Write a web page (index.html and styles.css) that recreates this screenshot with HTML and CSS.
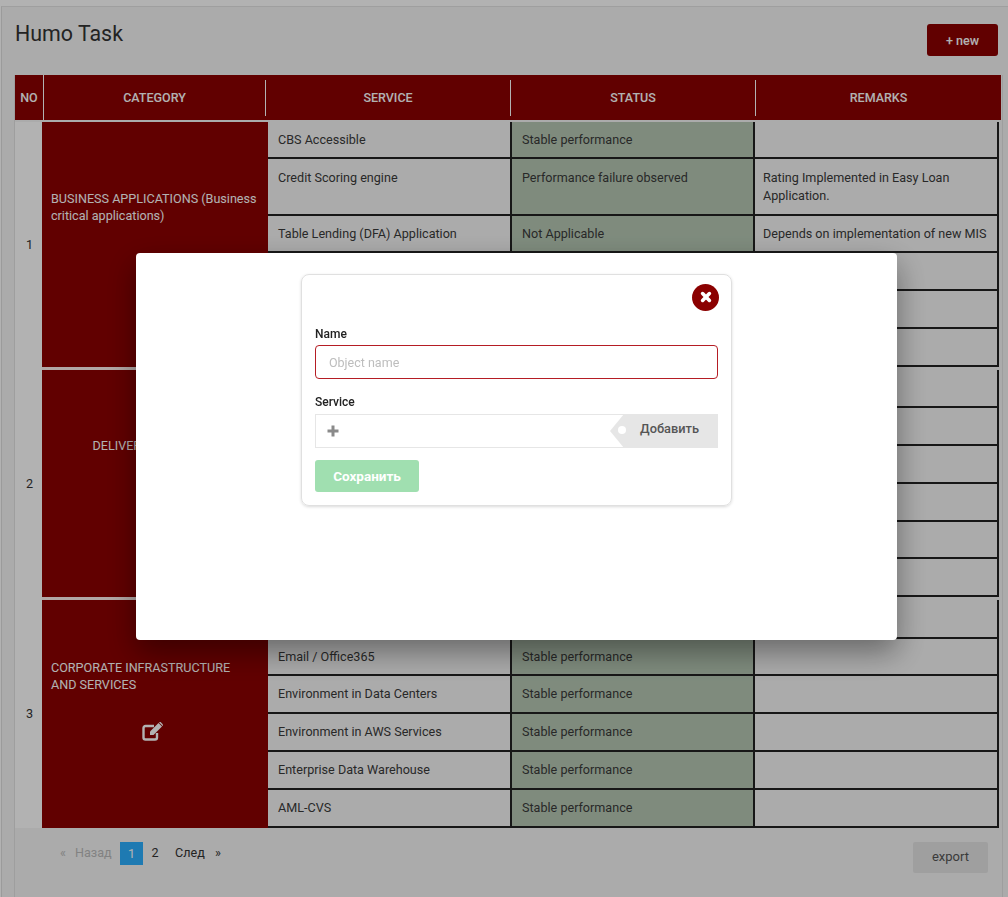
FILE: index.html
```html
<!DOCTYPE html>
<html lang="en">
<head>
  <meta charset="UTF-8">
  <title>Humo Task</title>
  <link rel="stylesheet" href="styles.css">
</head>
<body>
  <div class="page">
    <div class="topbar">
      <h1>Humo Task</h1>
      <button class="btn-new">+ new</button>
    </div>

    <div class="table-wrap">
      <div class="thead">
        <div class="th th-no">NO</div>
        <div class="th th-cat">CATEGORY</div>
        <div class="th th-col">SERVICE</div>
        <div class="th th-col">STATUS</div>
        <div class="th th-last">REMARKS</div>
      </div>

      <table class="tasks">
        <colgroup>
          <col class="c-no"><col class="c-cat"><col class="c-service"><col class="c-status"><col class="c-remarks">
        </colgroup>
        <tr class="h37">
          <td class="no" rowspan="6">1</td>
          <td class="cat" rowspan="6">
            <p>BUSINESS APPLICATIONS (Business critical applications)</p>
            <svg class="edit" viewBox="0 0 22 19"><use href="#edit-icon"/></svg>
          </td>
          <td class="service">CBS Accessible</td>
          <td class="status">Stable performance</td>
          <td class="remarks"></td>
        </tr>
        <tr class="h57">
          <td class="service">Credit Scoring engine</td>
          <td class="status">Performance failure observed</td>
          <td class="remarks">Rating Implemented in Easy Loan Application.</td>
        </tr>
        <tr class="h37">
          <td class="service">Table Lending (DFA) Application</td>
          <td class="status">Not Applicable</td>
          <td class="remarks">Depends on implementation of new MIS</td>
        </tr>
        <tr><td class="service"></td><td class="status"></td><td class="remarks"></td></tr>
        <tr><td class="service"></td><td class="status"></td><td class="remarks"></td></tr>
        <tr><td class="service"></td><td class="status"></td><td class="remarks"></td></tr>
        <tr class="gap"><td class="no"></td><td class="gap-cat"></td><td colspan="3"></td></tr>

        <tr>
          <td class="no" rowspan="6">2</td>
          <td class="cat cat-center" rowspan="6">
            <p>DELIVERY CHANNELS</p>
            <svg class="edit" viewBox="0 0 22 19"><use href="#edit-icon"/></svg>
          </td>
          <td class="service"></td><td class="status"></td><td class="remarks"></td>
        </tr>
        <tr><td class="service"></td><td class="status"></td><td class="remarks"></td></tr>
        <tr><td class="service"></td><td class="status"></td><td class="remarks"></td></tr>
        <tr><td class="service"></td><td class="status"></td><td class="remarks"></td></tr>
        <tr class="h37"><td class="service"></td><td class="status"></td><td class="remarks"></td></tr>
        <tr><td class="service"></td><td class="status"></td><td class="remarks"></td></tr>
        <tr class="gap"><td class="no"></td><td class="gap-cat"></td><td colspan="3"></td></tr>

        <tr class="h39">
          <td class="no" rowspan="6">3</td>
          <td class="cat" rowspan="6">
            <p>CORPORATE INFRASTRUCTURE AND SERVICES</p>
            <svg class="edit" viewBox="0 0 22 19"><use href="#edit-icon"/></svg>
          </td>
          <td class="service"></td><td class="status"></td><td class="remarks"></td>
        </tr>
        <tr class="h37">
          <td class="service">Email / Office365</td>
          <td class="status">Stable performance</td>
          <td class="remarks"></td>
        </tr>
        <tr>
          <td class="service">Environment in Data Centers</td>
          <td class="status">Stable performance</td>
          <td class="remarks"></td>
        </tr>
        <tr>
          <td class="service">Environment in AWS Services</td>
          <td class="status">Stable performance</td>
          <td class="remarks"></td>
        </tr>
        <tr>
          <td class="service">Enterprise Data Warehouse</td>
          <td class="status">Stable performance</td>
          <td class="remarks"></td>
        </tr>
        <tr>
          <td class="service">AML-CVS</td>
          <td class="status">Stable performance</td>
          <td class="remarks"></td>
        </tr>
      </table>

      <div class="footer">
        <div class="pager">
          <span class="muted arrow-prev">«</span>
          <span class="muted prev">Назад</span>
          <span class="current">1</span>
          <span class="num">2</span>
          <span class="next">След</span>
          <span>»</span>
        </div>
        <button class="btn-export">export</button>
      </div>
    </div>
  </div>

  <!-- затемнение и модальное окно -->
  <div class="overlay">
    <div class="modal">
      <form class="card">
        <div class="card-top">
          <button type="button" class="close">
            <svg viewBox="0 0 12 12" width="12" height="12"><path d="M2.6 2.6 9.4 9.4M9.4 2.6 2.6 9.4" stroke="#fff" stroke-width="3.6" stroke-linecap="round"/></svg>
          </button>
        </div>
        <label class="label" for="objName">Name</label>
        <input class="name-input" id="objName" type="text" placeholder="Object name">
        <div class="label service-label">Service</div>
        <div class="service-field">
          <svg class="plus" viewBox="0 0 12 12" width="12" height="12"><path d="M6 0.5V11.5M0.5 6H11.5" stroke="#8a8a8a" stroke-width="3"/></svg>
          <span class="tag">Добавить</span>
        </div>
        <button type="button" class="btn-save">Сохранить</button>
      </form>
    </div>
  </div>

  <svg class="defs" width="0" height="0">
    <symbol id="edit-icon" viewBox="0 0 22 19">
      <path d="M12 4H3.5A2 2 0 0 0 1.5 6V15.5A2 2 0 0 0 3.5 17.5H13A2 2 0 0 0 15 15.5V11" fill="none" stroke="currentColor" stroke-width="2.4"/>
      <path d="M8 9.5 16.5 1 20 4.5 11.5 13H8Z" fill="currentColor"/>
      <path d="M17.5 0 18.6 0 21 2.4V3.5L20.6 3.9 17.1 0.4Z" fill="currentColor"/>
    </symbol>
  </svg>
</body>
</html>
```

FILE: styles.css
```css
* {
  box-sizing: border-box;
}

html, body {
  height: 100%;
}

body {
  margin: 0;
  background: #fff;
  font-family: Roboto, "Liberation Sans", sans-serif;
  font-size: 12.6px;
  color: #333;
  overflow: hidden;
}

.page {
  height: 891px;
  margin: 6px 0 0 1px;
  padding-top: 17px;
  background: #f5f5f5;
  border-top: 1px solid #e4e4e4;
  border-left: 1px solid #dedede;
  display: flex;
  flex-direction: column;
}

/* заголовок */
.topbar {
  display: flex;
  justify-content: space-between;
  align-items: flex-start;
  height: 51px;
  padding: 0 10px 0 13px;
}

h1 {
  margin: -4px 0 0;
  font-size: 21.4px;
  font-weight: 400;
  line-height: 28px;
  color: #333;
}

.btn-new {
  width: 71px;
  height: 32px;
  border: none;
  border-radius: 3px;
  background: #8b0000;
  color: #fff;
  font: 500 12.6px Roboto, sans-serif;
}

/* таблица */
.table-wrap {
  flex: 1;
  width: 989px;
  margin-left: 12px;
  border-left: 1px solid #e2e2e2;
  border-right: 1px solid #e2e2e2;
}

.thead {
  display: flex;
  align-items: center;
  width: 986px;
  height: 45px;
  margin-bottom: 2px;
  background: #8b0000;
  color: #fff;
  font-weight: 500;
  font-size: 12.5px;
}

.th {
  display: flex;
  align-items: center;
  justify-content: center;
  height: 36px;
  border-right: 1px solid #fff;
}

.th-no {
  width: 29px;
  height: 45px;
}

.th-cat {
  width: 222px;
}

.th-col {
  width: 245px;
}

.th-last {
  flex: 1;
  border-right: none;
}

.tasks {
  width: 984px;
  table-layout: fixed;
  border-collapse: separate;
  border-spacing: 0;
}

.c-no { width: 27px; }
.c-cat { width: 226px; }
.c-service { width: 244px; }
.c-status { width: 243px; }
.c-remarks { width: 244px; }

.tasks td {
  height: 38px;
  padding: 9px 9px 0 10px;
  line-height: 18px;
  vertical-align: top;
}

.tasks tr.h37 td { height: 37px; }
.tasks tr.h39 td { height: 39px; }

.tasks tr.h57 td {
  height: 57px;
  padding-top: 10px;
}

.tasks td.remarks {
  padding-left: 8px;
}

.tasks td.no {
  padding: 0 0 0 2px;
  text-align: center;
  vertical-align: middle;
  background: #fff;
}

.tasks td.cat {
  padding: 0 10px 0 9px;
  vertical-align: middle;
  background: #8b0000;
  color: #fff;
}

.cat p {
  margin: 0 0 29px;
  line-height: 17px;
}

.cat-center p {
  text-align: center;
}

.edit {
  display: block;
  width: 22px;
  height: 19px;
  margin: 0 0 28px 91px;
  color: #fff;
}

.service, .status, .remarks {
  border-bottom: 2px solid #222;
  border-right: 2px solid #222;
  color: #3a3a3a;
}

.status {
  background: #b6c8b4;
}

.tasks tr.gap td {
  height: 3px;
  padding: 0;
  line-height: 0;
  font-size: 0;
}

.tasks tr.gap td.no {
  padding: 0;
}

.tasks td.gap-cat {
  background: #fff0ee;
}

/* низ страницы */
.footer {
  display: flex;
  justify-content: space-between;
  padding: 14px 14px 0 45px;
}

.pager {
  display: flex;
  align-items: center;
  height: 21px;
  color: #333;
}

.muted {
  color: #bbb;
}

.arrow-prev {
  width: 15px;
}

.prev {
  width: 45px;
}

.current {
  width: 23px;
  height: 23px;
  margin-bottom: -2px;
  line-height: 23px;
  text-align: center;
  background: #2bafff;
  color: #fff;
}

.num {
  width: 24px;
  margin-right: 8px;
  text-align: center;
}

.next {
  width: 40px;
}

.btn-export {
  width: 75px;
  height: 31px;
  padding: 0 6px 2px;
  border: none;
  border-radius: 2px;
  background: #e4e4e4;
  color: #555;
  font: 400 13px Roboto, sans-serif;
}

/* модальное окно */
.overlay {
  position: fixed;
  inset: 0;
  padding: 253px 0 0 136px;
  background: rgba(0, 0, 0, 0.3);
}

.modal {
  display: flex;
  justify-content: center;
  align-items: flex-start;
  width: 761px;
  height: 387px;
  padding-top: 21px;
  background: #fff;
  border-radius: 4px;
  box-shadow: 0 12px 30px rgba(0, 0, 0, 0.4);
}

.card {
  display: flex;
  flex-direction: column;
  align-items: flex-start;
  width: 431px;
  height: 232px;
  padding: 9px 13px 0;
  border: 1px solid #e0e0e0;
  border-radius: 8px;
  box-shadow: 0 1px 3px rgba(0, 0, 0, 0.15);
}

.card-top {
  display: flex;
  justify-content: flex-end;
  width: 100%;
  height: 43px;
}

.close {
  display: flex;
  align-items: center;
  justify-content: center;
  width: 27px;
  height: 27px;
  padding: 0 0 1px;
  margin-right: -1px;
  border: none;
  border-radius: 50%;
  background: #8b0000;
}

.label {
  height: 15px;
  margin-bottom: 3px;
  font-size: 12px;
  font-weight: 500;
  line-height: 15px;
  color: #222;
}

.name-input {
  width: 403px;
  height: 34px;
  padding: 0 13px;
  border: 1px solid #b51d24;
  border-radius: 4px;
  font: 400 12.5px Roboto, sans-serif;
  outline: none;
}

.name-input::placeholder {
  color: #bdbdbd;
}

.service-label {
  margin: 16px 0 4px;
}

.service-field {
  display: flex;
  align-items: center;
  justify-content: space-between;
  width: 403px;
  height: 34px;
  padding-left: 11px;
  border: 1px solid #e6e6e6;
}

.plus {
  margin-bottom: 1px;
}

.tag {
  position: relative;
  display: flex;
  align-items: center;
  justify-content: flex-end;
  width: 108px;
  height: 34px;
  margin-right: -1px;
  padding: 0 19px 5px 0;
  background: #e6e6e6;
  clip-path: polygon(14px 0, 100% 0, 100% 100%, 14px 100%, 0 50%);
  font-size: 12.8px;
  font-weight: 500;
  color: #555;
}

/* дырка в ярлыке */
.tag::before {
  content: "";
  position: absolute;
  left: 8px;
  top: 12px;
  width: 8px;
  height: 8px;
  border-radius: 50%;
  background: #fff;
}

.btn-save {
  width: 104px;
  height: 32px;
  margin-top: 12px;
  border: none;
  border-radius: 3px;
  background: #a0dfb0;
  color: #fff;
  font: 700 13.5px Roboto, sans-serif;
}

.defs {
  position: absolute;
}
```
